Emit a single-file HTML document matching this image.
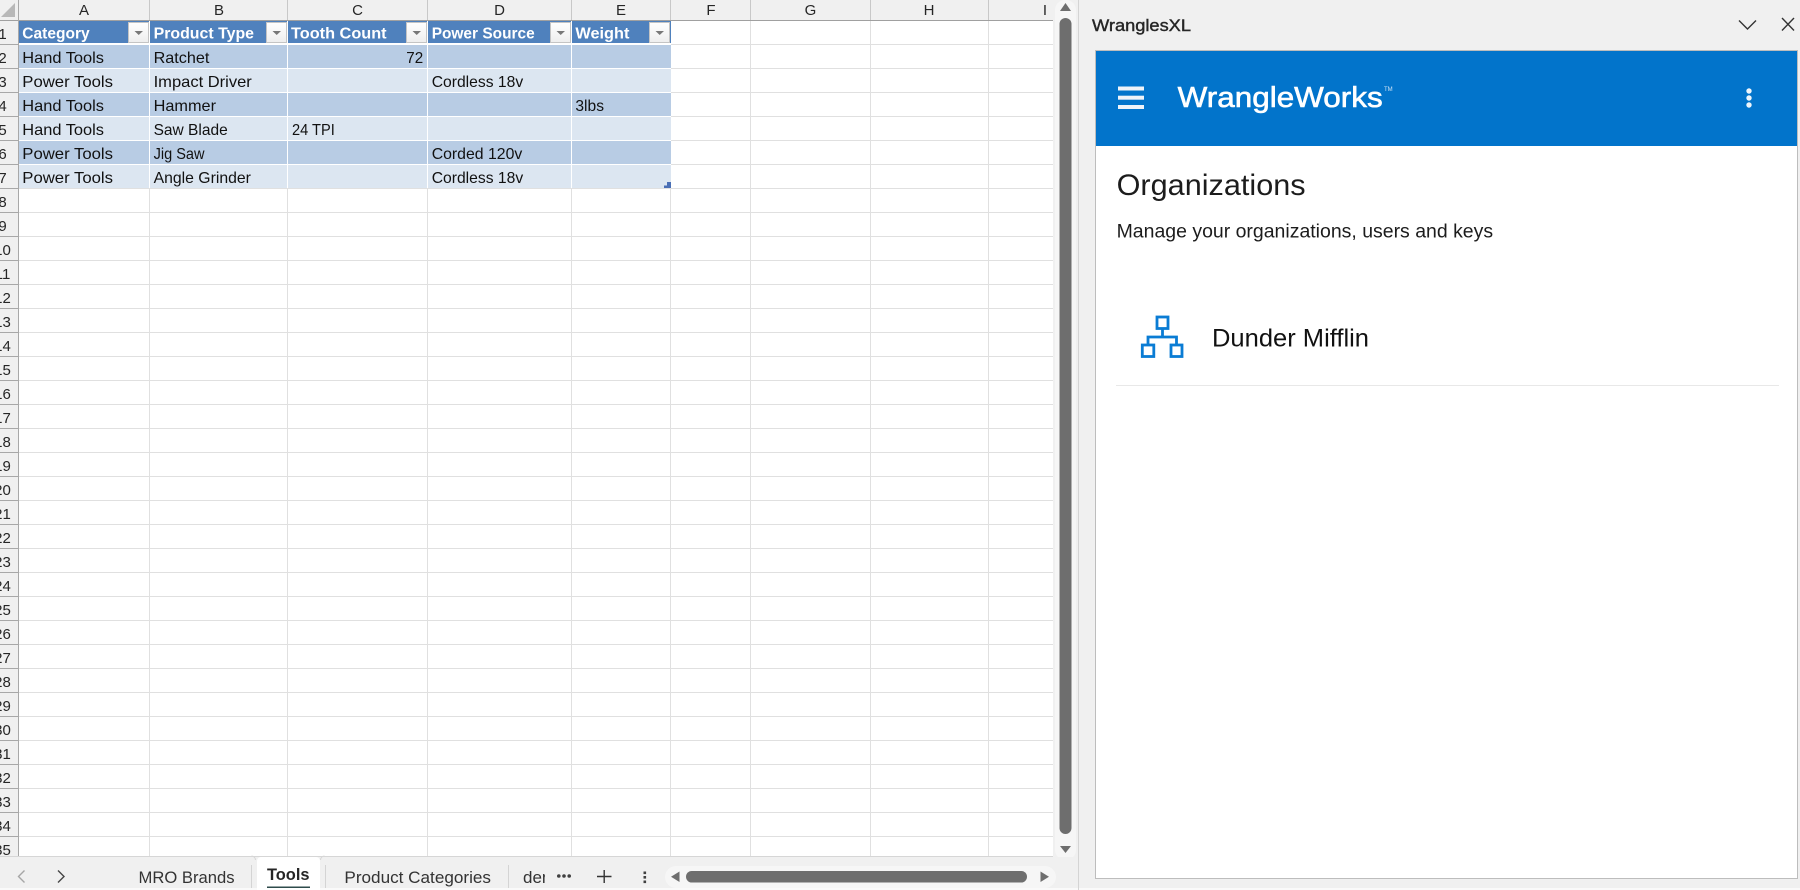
<!DOCTYPE html>
<html><head><meta charset="utf-8"><title>WranglesXL</title>
<style>
html,body{margin:0;padding:0;width:1800px;height:890px;overflow:hidden;background:#f0f0f0}
svg{display:block}
text{font-family:"Liberation Sans",Arial,sans-serif}
.c{font-size:16px;fill:#111}
.h{font-size:16px;font-weight:bold;fill:#fff}
.l{font-size:15px;fill:#262626;text-anchor:middle}
.r{font-size:15px;fill:#262626;text-anchor:middle}
</style></head><body>
<svg width="1800" height="890" viewBox="0 0 1800 890" xmlns="http://www.w3.org/2000/svg">
<defs>
<pattern id="hl" patternUnits="userSpaceOnUse" x="0" y="20" width="10" height="24"><rect x="0" y="0" width="10" height="1" fill="#e0e0e0"/></pattern>
<pattern id="rl" patternUnits="userSpaceOnUse" x="0" y="20" width="10" height="24"><rect x="0" y="0" width="10" height="1" fill="#a8a8a8"/></pattern>
<clipPath id="derclip"><rect x="515" y="860" width="30" height="28"/></clipPath>
<linearGradient id="fb" x1="0" y1="0" x2="0" y2="1"><stop offset="0" stop-color="#ffffff"/><stop offset="1" stop-color="#eeeeee"/></linearGradient>
</defs>
<rect width="1800" height="890" fill="#f0f0f0"/>
<!-- grid -->
<rect x="19" y="21" width="1034" height="836" fill="#fff"/>
<rect x="19" y="21" width="1034" height="836" fill="url(#hl)"/>
<g fill="#e0e0e0">
<rect x="149" y="21" width="1" height="836"/><rect x="287" y="21" width="1" height="836"/><rect x="427" y="21" width="1" height="836"/><rect x="571" y="21" width="1" height="836"/><rect x="670" y="21" width="1" height="836"/><rect x="750" y="21" width="1" height="836"/><rect x="870" y="21" width="1" height="836"/><rect x="988" y="21" width="1" height="836"/>
</g>
<!-- column header -->
<g fill="#c8c8c8">
<rect x="149" y="0" width="1" height="20"/><rect x="287" y="0" width="1" height="20"/><rect x="427" y="0" width="1" height="20"/><rect x="571" y="0" width="1" height="20"/><rect x="670" y="0" width="1" height="20"/><rect x="750" y="0" width="1" height="20"/><rect x="870" y="0" width="1" height="20"/><rect x="988" y="0" width="1" height="20"/>
</g>
<rect x="0" y="20" width="1053" height="1" fill="#a0a0a0"/>
<rect x="0" y="21" width="18" height="836" fill="url(#rl)"/>
<rect x="18" y="0" width="1" height="857" fill="#a8a8a8"/>
<polygon points="15,3 15,17 1,17" fill="#b8b8b8"/>
<text class="l" x="84" y="15">A</text><text class="l" x="219" y="15">B</text><text class="l" x="357.5" y="15">C</text><text class="l" x="499.5" y="15">D</text><text class="l" x="621" y="15">E</text><text class="l" x="711" y="15">F</text><text class="l" x="810.5" y="15">G</text><text class="l" x="929" y="15">H</text><text class="l" x="1045" y="15">I</text>
<!-- row numbers -->
<text class="r" x="2.5" y="39">1</text><text class="r" x="2.5" y="63">2</text><text class="r" x="2.5" y="87">3</text><text class="r" x="2.5" y="111">4</text><text class="r" x="2.5" y="135">5</text><text class="r" x="2.5" y="159">6</text><text class="r" x="2.5" y="183">7</text><text class="r" x="2.5" y="207">8</text><text class="r" x="2.5" y="231">9</text><text class="r" x="2.5" y="255">10</text><text class="r" x="2.5" y="279">11</text><text class="r" x="2.5" y="303">12</text><text class="r" x="2.5" y="327">13</text><text class="r" x="2.5" y="351">14</text><text class="r" x="2.5" y="375">15</text><text class="r" x="2.5" y="399">16</text><text class="r" x="2.5" y="423">17</text><text class="r" x="2.5" y="447">18</text><text class="r" x="2.5" y="471">19</text><text class="r" x="2.5" y="495">20</text><text class="r" x="2.5" y="519">21</text><text class="r" x="2.5" y="543">22</text><text class="r" x="2.5" y="567">23</text><text class="r" x="2.5" y="591">24</text><text class="r" x="2.5" y="615">25</text><text class="r" x="2.5" y="639">26</text><text class="r" x="2.5" y="663">27</text><text class="r" x="2.5" y="687">28</text><text class="r" x="2.5" y="711">29</text><text class="r" x="2.5" y="735">30</text><text class="r" x="2.5" y="759">31</text><text class="r" x="2.5" y="783">32</text><text class="r" x="2.5" y="807">33</text><text class="r" x="2.5" y="831">34</text><text class="r" x="2.5" y="855">35</text>
<!-- table -->
<rect x="19" y="21" width="652" height="22" fill="#4f81bd"/>
<rect x="19" y="43" width="652" height="2" fill="#fff"/>
<rect x="19" y="45" width="652" height="23" fill="#b8cce4"/>
<rect x="19" y="69" width="652" height="23" fill="#dce6f1"/>
<rect x="19" y="93" width="652" height="23" fill="#b8cce4"/>
<rect x="19" y="117" width="652" height="23" fill="#dce6f1"/>
<rect x="19" y="141" width="652" height="23" fill="#b8cce4"/>
<rect x="19" y="165" width="652" height="23" fill="#dce6f1"/>
<g fill="#fff">
<rect x="19" y="68" width="652" height="1"/><rect x="19" y="92" width="652" height="1"/><rect x="19" y="116" width="652" height="1"/><rect x="19" y="140" width="652" height="1"/><rect x="19" y="164" width="652" height="1"/>
<rect x="149" y="21" width="1" height="167"/><rect x="287" y="21" width="1" height="167"/><rect x="427" y="21" width="1" height="167"/><rect x="571" y="21" width="1" height="167"/>
</g>
<!-- filter buttons -->
<g fill="url(#fb)" stroke="#c4c4c4">
<rect x="128.5" y="22.5" width="20" height="20"/><rect x="266.5" y="22.5" width="20" height="20"/><rect x="406.5" y="22.5" width="20" height="20"/><rect x="550.5" y="22.5" width="20" height="20"/><rect x="649.5" y="22.5" width="20" height="20"/>
</g>
<g fill="#787878">
<polygon points="134.5,31 143,31 138.7,35"/><polygon points="272.5,31 281,31 276.7,35"/><polygon points="412.5,31 421,31 416.7,35"/><polygon points="556.5,31 565,31 560.7,35"/><polygon points="655.5,31 664,31 659.7,35"/>
</g>
<!-- header text -->
<text class="h" x="22.3" y="38.5" textLength="67.4" lengthAdjust="spacingAndGlyphs">Category</text>
<text class="h" x="153.6" y="38.5" textLength="100.4" lengthAdjust="spacingAndGlyphs">Product Type</text>
<text class="h" x="291" y="38.5" textLength="95.6" lengthAdjust="spacingAndGlyphs">Tooth Count</text>
<text class="h" x="431.7" y="38.5" textLength="103" lengthAdjust="spacingAndGlyphs">Power Source</text>
<text class="h" x="575.4" y="38.5" textLength="54" lengthAdjust="spacingAndGlyphs">Weight</text>
<!-- cells -->
<text class="c" x="22.3" y="63" textLength="81.7" lengthAdjust="spacingAndGlyphs">Hand Tools</text>
<text class="c" x="153.6" y="63" textLength="55.8" lengthAdjust="spacingAndGlyphs">Ratchet</text>
<text class="c" x="406.3" y="63" textLength="16.9" lengthAdjust="spacingAndGlyphs">72</text>
<text class="c" x="22.3" y="87" textLength="90.7" lengthAdjust="spacingAndGlyphs">Power Tools</text>
<text class="c" x="153.6" y="87" textLength="98.2" lengthAdjust="spacingAndGlyphs">Impact Driver</text>
<text class="c" x="431.7" y="87" textLength="91.5" lengthAdjust="spacingAndGlyphs">Cordless 18v</text>
<text class="c" x="22.3" y="111" textLength="81.7" lengthAdjust="spacingAndGlyphs">Hand Tools</text>
<text class="c" x="153.6" y="111" textLength="62.4" lengthAdjust="spacingAndGlyphs">Hammer</text>
<text class="c" x="575.4" y="111" textLength="28.6" lengthAdjust="spacingAndGlyphs">3lbs</text>
<text class="c" x="22.3" y="135" textLength="81.7" lengthAdjust="spacingAndGlyphs">Hand Tools</text>
<text class="c" x="153.6" y="135" textLength="74.1" lengthAdjust="spacingAndGlyphs">Saw Blade</text>
<text class="c" x="292" y="135" textLength="42.8" lengthAdjust="spacingAndGlyphs">24 TPI</text>
<text class="c" x="22.3" y="159" textLength="90.7" lengthAdjust="spacingAndGlyphs">Power Tools</text>
<text class="c" x="153.6" y="159" textLength="50.9" lengthAdjust="spacingAndGlyphs">Jig Saw</text>
<text class="c" x="431.7" y="159" textLength="90.6" lengthAdjust="spacingAndGlyphs">Corded 120v</text>
<text class="c" x="22.3" y="183" textLength="90.7" lengthAdjust="spacingAndGlyphs">Power Tools</text>
<text class="c" x="153.6" y="183" textLength="97.3" lengthAdjust="spacingAndGlyphs">Angle Grinder</text>
<text class="c" x="431.7" y="183" textLength="91.5" lengthAdjust="spacingAndGlyphs">Cordless 18v</text>
<polygon points="664,188 664,185.5 667,185.5 667,182 671,182 671,188" fill="#4a6fb5"/>
<!-- vertical scrollbar -->
<rect x="1055" y="0" width="21" height="860" rx="10" fill="#f6f6f6"/>
<polygon points="1065.5,3 1071,11 1060,11" fill="#6e6e6e"/>
<rect x="1059.5" y="18" width="12" height="816" rx="6" fill="#6e6e6e"/>
<polygon points="1060,846 1071,846 1065.5,853" fill="#6e6e6e"/>
<!-- sheet tab strip -->
<rect x="0" y="857" width="1078" height="33" fill="#f0f0f0"/>
<rect x="0" y="856" width="1053" height="1" fill="#d6d6d6"/>
<path d="M257 890V861a4 4 0 0 1 4-4H316a4 4 0 0 1 4 4V890Z" fill="#fff"/>
<path d="M255.5 860a4 4 0 0 0-4-4M320.5 860a4 4 0 0 1 4-4" fill="none" stroke="#d6d6d6"/>
<polyline points="24.5,870.5 18.5,876.5 24.5,882.5" fill="none" stroke="#a6a6a6" stroke-width="1.4"/>
<polyline points="58,870.5 64,876.5 58,882.5" fill="none" stroke="#444" stroke-width="1.4"/>
<text x="138.5" y="883" font-size="17" fill="#333" textLength="96" lengthAdjust="spacingAndGlyphs">MRO Brands</text>
<rect x="251" y="865" width="1" height="25" fill="#d4d4d4"/>
<text x="267" y="880" font-size="17" font-weight="bold" fill="#262626" textLength="42.5" lengthAdjust="spacingAndGlyphs">Tools</text>
<rect x="267" y="886.5" width="43" height="2" fill="#2e4b4b"/>
<rect x="325" y="865" width="1" height="25" fill="#d4d4d4"/>
<text x="344.4" y="883" font-size="17" fill="#333" textLength="146.6" lengthAdjust="spacingAndGlyphs">Product Categories</text>
<rect x="508" y="865" width="1" height="25" fill="#d4d4d4"/>
<text x="523" y="883" font-size="17" fill="#333" clip-path="url(#derclip)">demo</text>
<g fill="#404040"><circle cx="558.8" cy="876" r="1.8"/><circle cx="564" cy="876" r="1.8"/><circle cx="569.2" cy="876" r="1.8"/></g>
<path d="M597 876.5H611.5M604.2 870V883" stroke="#333" stroke-width="1.4" fill="none"/>
<g fill="#404040"><rect x="643.5" y="871.5" width="2.6" height="2.6"/><rect x="643.5" y="876" width="2.6" height="2.6"/><rect x="643.5" y="880.5" width="2.6" height="2.6"/></g>
<rect x="665" y="866" width="391" height="22" rx="11" fill="#f6f6f6"/>
<polygon points="671,876.7 679.5,871.5 679.5,882" fill="#6e6e6e"/>
<rect x="686" y="871" width="341" height="11.5" rx="5.7" fill="#6e6e6e"/>
<polygon points="1049,876.7 1040.5,871.5 1040.5,882" fill="#6e6e6e"/>
<rect x="0" y="888" width="1800" height="2" fill="#fafafa"/>
<path d="M257 888H320V890H257Z" fill="#fff"/>
<!-- task pane -->
<rect x="1078" y="0" width="1" height="890" fill="#d4d4d4"/>
<text x="1092" y="31" font-size="17" fill="#262626" stroke="#262626" stroke-width=".4" textLength="99" lengthAdjust="spacingAndGlyphs">WranglesXL</text>
<polyline points="1739,20.5 1747.5,29 1756,20.5" fill="none" stroke="#333" stroke-width="1.4"/>
<path d="M1782 18L1794 30.5M1794 18L1782 30.5" fill="none" stroke="#333" stroke-width="1.4"/>
<rect x="1095.5" y="50.5" width="702" height="828" fill="#fff" stroke="#bdbdbd"/>
<rect x="1096" y="51" width="701" height="95" fill="#0274cb"/>
<g fill="#eef3f9"><rect x="1118" y="86.5" width="26" height="4"/><rect x="1118" y="95.7" width="26" height="4"/><rect x="1118" y="105" width="26" height="4"/></g>
<text x="1177.7" y="107" font-size="29" fill="#fff" stroke="#fff" stroke-width=".6" textLength="205" lengthAdjust="spacingAndGlyphs">WrangleWorks</text>
<text x="1384" y="91" font-size="6" fill="#cfe3f5">TM</text>
<g fill="#eef5fb"><circle cx="1749" cy="91" r="2.7"/><circle cx="1749" cy="98" r="2.7"/><circle cx="1749" cy="105" r="2.7"/></g>
<text x="1116.6" y="195" font-size="30" fill="#1c1c1c" textLength="189" lengthAdjust="spacingAndGlyphs">Organizations</text>
<text x="1116.6" y="237.5" font-size="19" fill="#1c1c1c" textLength="376.5" lengthAdjust="spacingAndGlyphs">Manage your organizations, users and keys</text>
<g fill="none" stroke="#0a7cd4" stroke-width="2.8">
<rect x="1157" y="317" width="11" height="11.5"/><rect x="1142.3" y="345" width="11.5" height="11.5"/><rect x="1171" y="345" width="11" height="11.5"/>
<path d="M1162.5 329V337M1148 345V337H1176.5V345"/>
</g>
<text x="1212" y="346.7" font-size="25" fill="#111" textLength="157" lengthAdjust="spacingAndGlyphs">Dunder Mifflin</text>
<rect x="1116" y="385" width="663" height="1" fill="#e8e8e8"/>
</svg>
</body></html>
